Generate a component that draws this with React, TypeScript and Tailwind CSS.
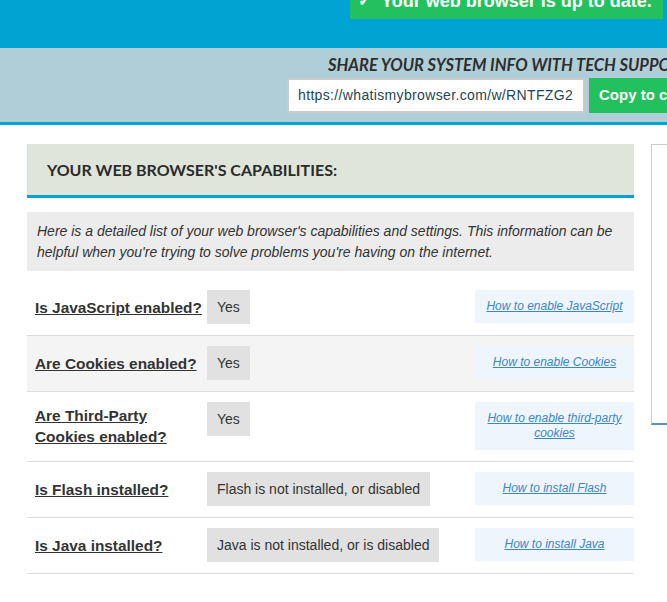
const rows = [
  { label: "Is JavaScript enabled?", value: "Yes", link: "How to enable JavaScript", shaded: false },
  { label: "Are Cookies enabled?", value: "Yes", link: "How to enable Cookies", shaded: true },
  { label: "Are Third-Party Cookies enabled?", value: "Yes", link: "How to enable third-party cookies", shaded: false },
  { label: "Is Flash installed?", value: "Flash is not installed, or disabled", link: "How to install Flash", shaded: false },
  { label: "Is Java installed?", value: "Java is not installed, or is disabled", link: "How to install Java", shaded: false },
];

export default function App() {
  return (
    <div className="w-[667px] h-[602px] overflow-hidden bg-white text-[#333] font-['Liberation_Sans',Arial,sans-serif]">
      {/* Top status band */}
      <div className="h-[48px] bg-[#00a3d1] pl-[350px]">
        <div className="w-[313px] h-[19px] overflow-hidden bg-[#22c15e] pl-[8px]">
          <div className="-mt-[8px] flex items-center whitespace-nowrap text-[18px] leading-[18px] font-bold text-white">
            <span className="mr-[10px] text-[16px] font-bold">✓</span>
            Your web browser is up to date.
          </div>
        </div>
      </div>

      {/* Share bar */}
      <div className="h-[77px] bg-[#b0ced8] border-b-[3px] border-[#00a3d1] pt-[7px]">
        <div className="pl-[328px] whitespace-nowrap text-[16.5px] leading-[20px] italic font-bold text-[#2e2e2e] font-['Lato',sans-serif]">
          SHARE YOUR SYSTEM INFO WITH TECH SUPPORT
        </div>
        <div className="mt-[3px] pl-[287px] flex gap-[4px] whitespace-nowrap">
          <div className="w-[298px] h-[35px] shrink-0 bg-white border-2 border-[#cbcbcb] pl-[9px] flex items-center text-[14px] tracking-[0.35px] text-[#1e4656]">
            https://whatismybrowser.com/w/RNTFZG2
          </div>
          <div className="h-[35px] shrink-0 bg-[#22c15e] px-[10px] flex items-center text-[15px] font-bold text-white">
            Copy to clipboard
          </div>
        </div>
      </div>

      {/* Main */}
      <div className="flex pt-[19px] pl-[27px]">
        <div className="w-[607px] shrink-0">
          <div className="h-[54px] bg-[#dfe5da] border-b-[3px] border-[#00a3d1] pl-[20px] flex items-center">
            <h2 className="text-[16px] font-bold text-[#2b2b2b] font-['Lato',sans-serif]">
              YOUR WEB BROWSER'S CAPABILITIES:
            </h2>
          </div>

          <p className="mt-[14px] bg-[#ececec] px-[10px] py-[8.5px] text-[14px] leading-[21px] italic text-[#333]">
            Here is a detailed list of your web browser's capabilities and settings. This information can be
            helpful when you're trying to solve problems you're having on the internet.
          </p>

          <div className="mt-[9px]">
            {rows.map((r) => (
              <div
                key={r.label}
                className={`grid grid-cols-[172px_1fr_159px] pl-[8px] pt-[10px] pb-[11px] border-b border-[#dddddd] ${
                  r.shaded ? "bg-[#f4f4f4]" : "bg-white"
                }`}
              >
                <a className="self-center pr-[4px] text-[15.4px] leading-[21px] font-bold underline text-[#333]">
                  {r.label}
                </a>
                <div className="self-start justify-self-start bg-[#e1e1e1] px-[10px] py-[8px] text-[14px] leading-[18px] text-[#333]">
                  {r.value}
                </div>
                <div className="self-start bg-[#eef5fc] px-[8px] py-[9px] text-center text-[12px] leading-[15px]">
                  <a className="italic underline text-[#3d86c6]">{r.link}</a>
                </div>
              </div>
            ))}
          </div>
        </div>

        <div className="ml-[17px] w-[120px] h-[281px] shrink-0 border border-[#cccccc] border-b-[2px] border-b-[#5a8ed8]" />
      </div>
    </div>
  );
}
